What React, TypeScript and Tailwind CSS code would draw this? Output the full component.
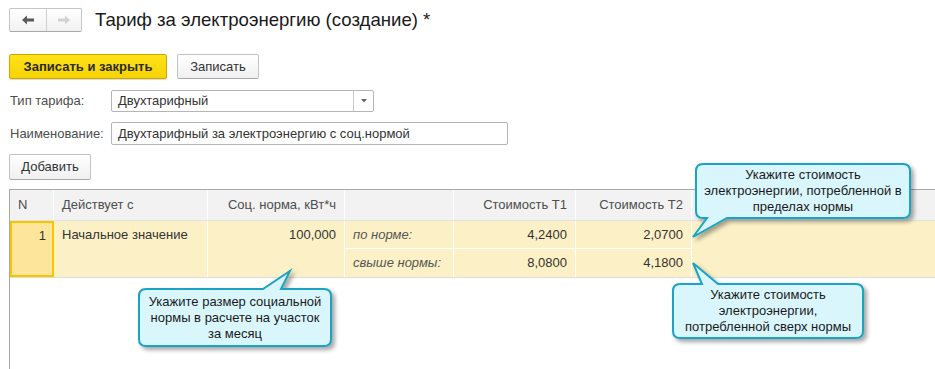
import React from "react";

type Pt = [number, number];

function calloutPath(
  x: number,
  y: number,
  w: number,
  h: number,
  r: number,
  side: "top" | "bottom",
  b1: number,
  b2: number,
  tip: Pt
) {
  if (side === "bottom") {
    return `M ${x + r} ${y} L ${x + w - r} ${y} Q ${x + w} ${y} ${x + w} ${y + r} L ${x + w} ${y + h - r} Q ${x + w} ${y + h} ${x + w - r} ${y + h} L ${b2} ${y + h} L ${tip[0]} ${tip[1]} L ${b1} ${y + h} L ${x + r} ${y + h} Q ${x} ${y + h} ${x} ${y + h - r} L ${x} ${y + r} Q ${x} ${y} ${x + r} ${y} Z`;
  }
  return `M ${x + r} ${y} L ${b1} ${y} L ${tip[0]} ${tip[1]} L ${b2} ${y} L ${x + w - r} ${y} Q ${x + w} ${y} ${x + w} ${y + r} L ${x + w} ${y + h - r} Q ${x + w} ${y + h} ${x + w - r} ${y + h} L ${x + r} ${y + h} Q ${x} ${y + h} ${x} ${y + h - r} L ${x} ${y + r} Q ${x} ${y} ${x + r} ${y} Z`;
}

const callouts = [
  {
    x: 696,
    y: 164,
    w: 214,
    h: 54,
    side: "bottom" as const,
    b1: 707,
    b2: 727,
    tip: [693, 237] as Pt,
    lines: ["Укажите стоимость", "электроэнергии, потребленной в", "пределах нормы"],
  },
  {
    x: 673,
    y: 284,
    w: 190,
    h: 54,
    side: "top" as const,
    b1: 702,
    b2: 718,
    tip: [693, 263] as Pt,
    lines: ["Укажите стоимость", "электроэнергии,", "потребленной сверх нормы"],
  },
  {
    x: 139,
    y: 289,
    w: 192,
    h: 57,
    side: "top" as const,
    b1: 263,
    b2: 281,
    tip: [290, 271] as Pt,
    lines: ["Укажите размер социальной", "нормы в расчете на участок", "за месяц"],
  },
];

const hdr = "flex items-center h-full px-[8px] text-[#4d4d4d] border-r border-white";
const cell = "flex items-center px-[8px] text-[#333] border-r border-white";

export default function App() {
  return (
    <div
      className="relative w-[935px] h-[369px] overflow-hidden bg-white text-[13px] leading-[16px] text-[#333]"
      style={{ fontFamily: '"Liberation Sans", Arial, sans-serif' }}
    >
      {/* Title row */}
      <div className="flex items-center pl-[9px] pt-[8px]">
        <div className="flex h-[24px] w-[73px] rounded-[2px] border border-[#c6c6c6] border-b-[#a8a8a8] bg-gradient-to-b from-white to-[#f1f1f1]">
          <div className="flex w-[37px] items-center justify-center border-r border-[#d0d0d0]">
            <svg width="12" height="10" viewBox="0 0 12 10">
              <path d="M0 5 L5 0.5 L5 3.5 L12 3.5 L12 6.5 L5 6.5 L5 9.5 Z" fill="#5a5a5a" />
            </svg>
          </div>
          <div className="flex flex-1 items-center justify-center">
            <svg width="12" height="10" viewBox="0 0 12 10">
              <path d="M12 5 L7 0.5 L7 3.5 L0 3.5 L0 6.5 L7 6.5 L7 9.5 Z" fill="#d2d2d2" />
            </svg>
          </div>
        </div>
        <div className="ml-[13px] text-[18.6px] leading-[22px] text-[#1a1a1a]">
          Тариф за электроэнергию (создание) *
        </div>
      </div>

      {/* Buttons */}
      <div className="mt-[22px] flex gap-[10px] pl-[9px]">
        <div className="flex h-[25px] w-[158px] items-center justify-center rounded-[2px] border border-[#c9a900] bg-gradient-to-b from-[#ffe21a] to-[#f7d400] font-bold text-[#2b2b2b] shadow-[0_1px_1px_rgba(0,0,0,0.15)]">
          Записать и закрыть
        </div>
        <div className="flex h-[25px] w-[82px] items-center justify-center rounded-[2px] border border-[#c3c3c3] border-b-[#a9a9a9] bg-gradient-to-b from-white to-[#f0f0f0] text-[#333]">
          Записать
        </div>
      </div>

      {/* Form */}
      <div className="mt-[11px] flex items-center pl-[10px]">
        <div className="w-[101px] text-[#4d4d4d]">Тип тарифа:</div>
        <div className="flex h-[22px] w-[263px] rounded-[2px] border border-[#b5b5b5] bg-white">
          <div className="flex flex-1 items-center px-[6px] text-[#333]">Двухтарифный</div>
          <div className="flex w-[20px] items-center justify-center border-l border-[#c8c8c8]">
            <svg width="6" height="4" viewBox="0 0 6 4">
              <path d="M0 0 L6 0 L3 3.5 Z" fill="#666" />
            </svg>
          </div>
        </div>
      </div>
      <div className="mt-[10px] flex items-center pl-[10px]">
        <div className="w-[101px] text-[#4d4d4d]">Наименование:</div>
        <div className="flex h-[23px] w-[397px] items-center rounded-[2px] border border-[#b5b5b5] bg-white px-[6px] text-[#333]">
          Двухтарифный за электроэнергию с соц.нормой
        </div>
      </div>
      <div className="mt-[9px] pl-[9px]">
        <div className="flex h-[26px] w-[82px] items-center justify-center rounded-[2px] border border-[#c3c3c3] border-b-[#a9a9a9] bg-gradient-to-b from-white to-[#f0f0f0] text-[#333]">
          Добавить
        </div>
      </div>

      {/* Table */}
      <div className="mt-[9px] ml-[9px] h-[200px] border-l border-t border-[#a9a9a9]">
        <div className="grid h-[31px] grid-cols-[44px_154px_137px_109px_122px_116px_1fr] border-b border-[#e2e2e2] bg-[#f2f2f2]">
          <div className={hdr}>N</div>
          <div className={hdr}>Действует с</div>
          <div className={hdr + " justify-end"}>Соц. норма, кВт*ч</div>
          <div className={hdr}></div>
          <div className={hdr + " justify-end"}>Стоимость Т1</div>
          <div className={hdr + " justify-end"}>Стоимость Т2</div>
          <div className="h-full"></div>
        </div>
        <div className="grid grid-cols-[44px_154px_137px_109px_122px_116px_1fr] grid-rows-[28px_28px] border-b border-[#dcdcdc] bg-[#fcf1c6]">
          <div className="row-span-2 flex justify-end border-2 border-[#f7c600] bg-[#fde59b] px-[6px] pt-[5px] text-[#333]">
            1
          </div>
          <div className="row-span-2 flex border-r border-white px-[8px] pt-[6px] text-[#333]">
            Начальное значение
          </div>
          <div className="row-span-2 flex justify-end border-r border-white px-[8px] pt-[6px] text-[#333]">
            100,000
          </div>
          <div className={cell + " border-b italic text-[#555]"}>по норме:</div>
          <div className={cell + " border-b justify-end"}>4,2400</div>
          <div className={cell + " border-b justify-end"}>2,0700</div>
          <div className="row-span-2"></div>
          <div className={cell + " italic text-[#555]"}>свыше нормы:</div>
          <div className={cell + " justify-end"}>8,0800</div>
          <div className={cell + " justify-end"}>4,1800</div>
        </div>
      </div>

      {/* Callouts */}
      <svg className="pointer-events-none absolute left-0 top-0" width="935" height="369">
        <defs>
          <filter id="sh" x="-20%" y="-20%" width="140%" height="150%">
            <feDropShadow dx="3" dy="3" stdDeviation="2" floodColor="#000" floodOpacity="0.35" />
          </filter>
        </defs>
        {callouts.map((c, i) => (
          <path
            key={i}
            d={calloutPath(c.x, c.y, c.w, c.h, 7, c.side, c.b1, c.b2, c.tip)}
            fill="#daf6fd"
            stroke="#1ea2c3"
            strokeWidth="2"
            filter="url(#sh)"
          />
        ))}
      </svg>
      {callouts.map((c, i) => (
        <div
          key={i}
          className="absolute flex flex-col items-center justify-center text-center text-[13px] leading-[16px] text-[#1a1a1a]"
          style={{ left: c.x, top: c.y, width: c.w, height: c.h }}
        >
          {c.lines.map((l, j) => (
            <div key={j} className="whitespace-nowrap">
              {l}
            </div>
          ))}
        </div>
      ))}
    </div>
  );
}
